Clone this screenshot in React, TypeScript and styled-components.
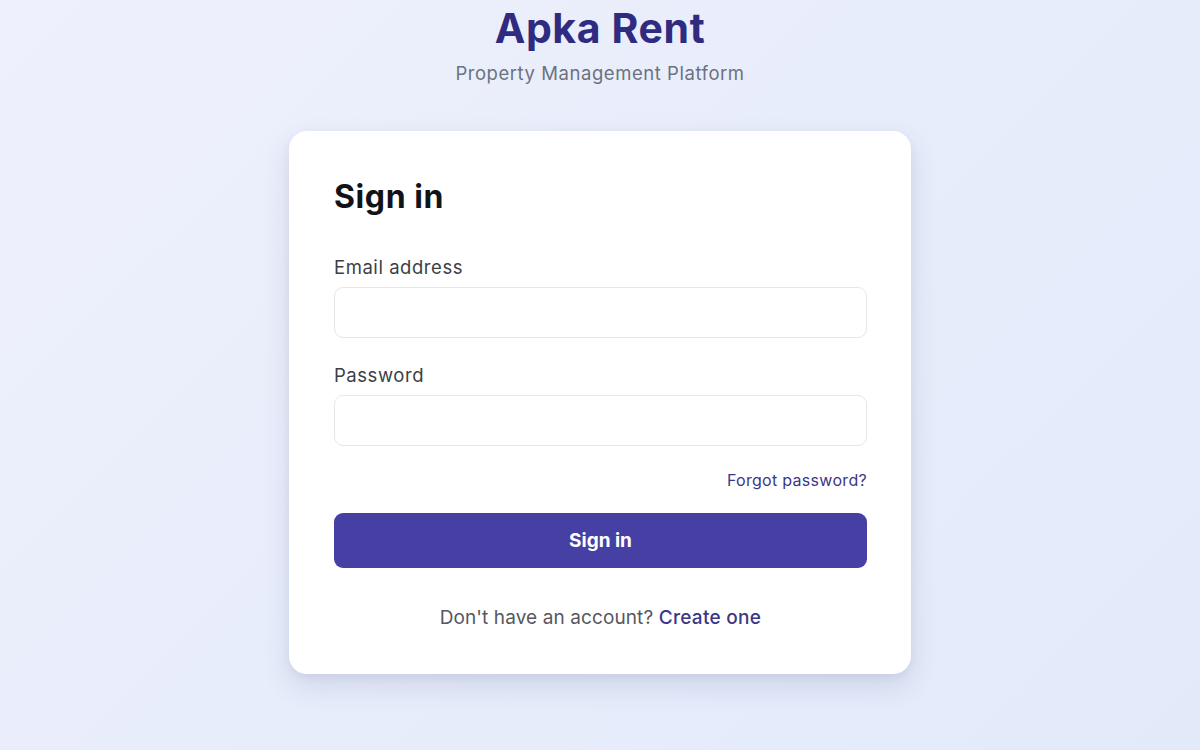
import React from "react";
import styled, { createGlobalStyle } from "styled-components";

const Global = createGlobalStyle`
  html, body { margin: 0; padding: 0; }
  body {
    font-family: Inter, "Noto Sans", "Liberation Sans", sans-serif;
    background: linear-gradient(135deg, #eef0fc 0%, #e8edfb 50%, #e2eafa 100%);
    min-height: 750px;
  }
  * { box-sizing: border-box; }
`;

const Page = styled.main`
  min-height: 750px;
  display: flex;
  flex-direction: column;
  align-items: center;
  padding-top: 4px;
`;

const Brand = styled.h1`
  margin: 0;
  font-size: 41px;
  line-height: 48px;
  font-weight: 700;
  color: #2f2b80;
  letter-spacing: 0.6px;
`;

const Tagline = styled.p`
  margin: 9px 0 0;
  font-size: 18.5px;
  line-height: 24px;
  color: #6b7280;
  letter-spacing: 0.55px;
`;

const Card = styled.section`
  margin-top: 46px;
  width: 622px;
  background: #ffffff;
  border-radius: 18px;
  box-shadow: 0 12px 28px rgba(60, 70, 120, 0.14), 0 3px 8px rgba(60, 70, 120, 0.06);
  padding: 46px 44px 44px 45px;
  display: flex;
  flex-direction: column;
`;

const Heading = styled.h2`
  margin: 0;
  font-size: 32px;
  line-height: 40px;
  font-weight: 700;
  color: #111318;
  letter-spacing: 0.6px;
`;

const Field = styled.div<{ $top: number }>`
  display: flex;
  flex-direction: column;
  margin-top: ${(p) => p.$top}px;
`;

const Label = styled.label`
  font-size: 18.5px;
  line-height: 24px;
  color: #3b3f46;
  margin-bottom: 8px;
  letter-spacing: 0.55px;
`;

const Input = styled.input`
  height: 51px;
  width: 100%;
  border: 1.5px solid #e6e7eb;
  border-radius: 9px;
  background: #fff;
  font-size: 17px;
  padding: 0 14px;
  font-family: inherit;
  outline: none;
`;

const ForgotRow = styled.div`
  display: flex;
  justify-content: flex-end;
  margin-top: 23px;
`;

const Link = styled.a<{ $size: number; $weight?: number }>`
  font-size: ${(p) => p.$size}px;
  line-height: 22px;
  color: #3a3886;
  font-weight: ${(p) => p.$weight ?? 400};
  text-decoration: none;
  cursor: pointer;
  letter-spacing: 0.3px;
`;

const Button = styled.button`
  margin-top: 22px;
  height: 55px;
  width: 100%;
  border: none;
  border-radius: 9px;
  background: #4640a5;
  color: #ffffff;
  font-family: inherit;
  font-size: 19px;
  font-weight: 700;
  cursor: pointer;
`;

const Footer = styled.p`
  margin: 38px 0 0;
  text-align: center;
  font-size: 19px;
  line-height: 24px;
  color: #55585f;
  letter-spacing: 0.1px;
`;

export default function App() {
  return (
    <>
      <Global />
      <Page>
        <Brand>Apka Rent</Brand>
        <Tagline>Property Management Platform</Tagline>
        <Card>
          <Heading>Sign in</Heading>
          <Field $top={38}>
            <Label htmlFor="email">Email address</Label>
            <Input id="email" type="email" />
          </Field>
          <Field $top={25}>
            <Label htmlFor="password">Password</Label>
            <Input id="password" type="password" />
          </Field>
          <ForgotRow>
            <Link $size={16}>Forgot password?</Link>
          </ForgotRow>
          <Button>Sign in</Button>
          <Footer>
            Don't have an account? <Link $size={19} $weight={500}>Create one</Link>
          </Footer>
        </Card>
      </Page>
    </>
  );
}
